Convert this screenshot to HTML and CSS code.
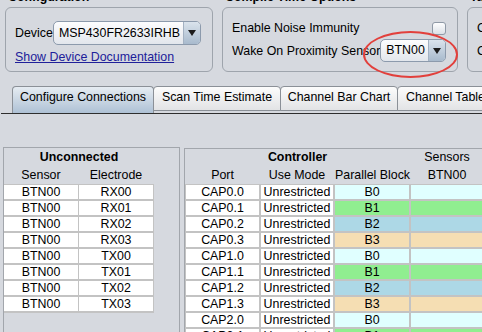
FILE: index.html
```html
<!DOCTYPE html>
<html lang="en">
<head>
  <meta charset="UTF-8" />
  <title>Configure Connections</title>
  <link rel="stylesheet" href="styles.css">
</head>
<body>
  <div class="top">
    <section class="group g-config">
      <h3 class="group-title">Configuration</h3>
      <div class="group-box">
        <div class="device-row">
          <span class="device-label">Device</span>
          <div class="combo combo-device">
            <span class="combo-text">MSP430FR2633IRHB</span>
            <span class="combo-arrow"></span>
          </div>
        </div>
        <a class="doc-link" href="#">Show Device Documentation</a>
      </div>
    </section>

    <section class="group g-compile">
      <h3 class="group-title">Compile Time Options</h3>
      <div class="group-box box-compile">
        <div class="opt-row opt-check">
          <span>Enable Noise Immunity</span>
          <span class="checkbox"></span>
        </div>
        <div class="opt-row opt-combo">
          <span>Wake On Proximity Sensor</span>
          <div class="combo combo-small">
            <span class="combo-text">BTN00</span>
            <span class="combo-arrow"></span>
          </div>
        </div>
        <div class="mark"></div>
      </div>
    </section>

    <section class="group g-third">
      <h3 class="group-title">Target</h3>
      <div class="group-box">
        <div class="opt-row opt-check"><span>Clock</span></div>
        <div class="opt-row opt-combo"><span>Conversion</span></div>
      </div>
    </section>
  </div>

  <nav class="tabs">
    <div class="tab tab-active">Configure Connections</div>
    <div class="tab tab-scan">Scan Time Estimate</div>
    <div class="tab tab-bar">Channel Bar Chart</div>
    <div class="tab tab-table">Channel Table</div>
  </nav>

  <main class="content">
    <section class="panel panel-unconnected">
      <div class="u-title">Unconnected</div>
      <div class="u-head">
        <span>Sensor</span>
        <span>Electrode</span>
      </div>
      <div class="u-grid">
        <span>BTN00</span><span>RX00</span>
        <span>BTN00</span><span>RX01</span>
        <span>BTN00</span><span>RX02</span>
        <span>BTN00</span><span>RX03</span>
        <span>BTN00</span><span>TX00</span>
        <span>BTN00</span><span>TX01</span>
        <span>BTN00</span><span>TX02</span>
        <span>BTN00</span><span>TX03</span>
      </div>
    </section>

    <section class="panel panel-controller">
      <div class="c-title">
        <span class="c-controller">Controller</span>
        <span>Sensors</span>
      </div>
      <div class="c-head">
        <span>Port</span>
        <span>Use Mode</span>
        <span>Parallel Block</span>
        <span>BTN00</span>
      </div>
      <div class="c-grid">
        <span>CAP0.0</span><span>Unrestricted</span><span class="b0">B0</span><span class="b0"></span>
        <span>CAP0.1</span><span>Unrestricted</span><span class="b1">B1</span><span class="b1"></span>
        <span>CAP0.2</span><span>Unrestricted</span><span class="b2">B2</span><span class="b2"></span>
        <span>CAP0.3</span><span>Unrestricted</span><span class="b3">B3</span><span class="b3"></span>
        <span>CAP1.0</span><span>Unrestricted</span><span class="b0">B0</span><span class="b0"></span>
        <span>CAP1.1</span><span>Unrestricted</span><span class="b1">B1</span><span class="b1"></span>
        <span>CAP1.2</span><span>Unrestricted</span><span class="b2">B2</span><span class="b2"></span>
        <span>CAP1.3</span><span>Unrestricted</span><span class="b3">B3</span><span class="b3"></span>
        <span>CAP2.0</span><span>Unrestricted</span><span class="b0">B0</span><span class="b0"></span>
        <span>CAP2.1</span><span>Unrestricted</span><span class="b1">B1</span><span class="b1"></span>
      </div>
    </section>
  </main>
</body>
</html>
```

FILE: styles.css
```css
* {
  box-sizing: border-box;
}

body {
  margin: 0;
  width: 482px;
  height: 332px;
  overflow: hidden;
  background: #d6d9df;
  font-family: "Liberation Sans", Arial, sans-serif;
  font-size: 12.4px;
  color: #000;
  white-space: nowrap;
}

/* top option groups */
.top {
  display: flex;
  gap: 9px;
  margin-top: -10px;
  padding-left: 5px;
}

.group {
  flex-shrink: 0;
}

.g-config {
  width: 208px;
}

.g-compile {
  width: 236px;
}

.g-third {
  width: 80px;
}

.group-title {
  margin: 0 0 3px 3px;
  height: 14px;
  line-height: 14px;
  font-size: 12.4px;
  font-weight: bold;
}

.group-box {
  height: 65px;
  border: 1px solid #9ea4ac;
  border-radius: 6px;
  padding: 13px 11px 0 9px;
}

.device-row {
  display: flex;
  align-items: center;
}

.device-label {
  width: 38px;
}

.combo {
  display: flex;
  border: 1px solid #8c9aac;
  border-radius: 5px;
  background: linear-gradient(#fdfdfe, #e2e6ec);
  overflow: hidden;
}

.combo-device {
  width: 149px;
  height: 24px;
}

.combo-small {
  width: 67px;
  height: 23px;
}

.combo-text {
  flex: 1;
  padding-left: 5px;
  line-height: 22px;
}

.combo-small .combo-text {
  line-height: 21px;
}

.combo-arrow {
  width: 17px;
  display: flex;
  align-items: center;
  justify-content: center;
  border-left: 1px solid #a3b1c2;
  background: linear-gradient(#dae3ec, #a8bacd);
}

.combo-arrow::after {
  content: "";
  border-left: 4px solid transparent;
  border-right: 4px solid transparent;
  border-top: 6px solid #1c1c1c;
}

.doc-link {
  display: block;
  margin-top: 5px;
  line-height: 15px;
  color: #20209a;
}

.box-compile {
  position: relative;
}

.opt-row {
  display: flex;
  align-items: center;
  justify-content: space-between;
}

.opt-check {
  height: 14px;
}

.opt-combo {
  height: 23px;
  margin-top: 4px;
}

.checkbox {
  width: 14px;
  height: 13px;
  border: 1px solid #8f99a6;
  border-radius: 3px;
  background: linear-gradient(#fdfdfe, #dce1e7);
}

/* red highlight drawn over the sensor combo */
.mark {
  position: absolute;
  left: 140px;
  top: 23px;
  width: 95px;
  height: 47px;
  border: 2px solid #e2403c;
  border-radius: 50%;
}

/* tabs */
.tabs {
  display: flex;
  align-items: flex-start;
  height: 28px;
  margin: 14px 0 0 1px;
  padding-left: 11px;
  border-bottom: 1px solid #2e2e2e;
}

.tab {
  flex-shrink: 0;
  height: 25px;
  margin-left: -1px;
  border: 1px solid #8b9097;
  border-radius: 4px 4px 0 0;
  background: linear-gradient(#fcfcfc, #e2e3e5);
  line-height: 21px;
  text-align: center;
  overflow: hidden;
}

.tab-active {
  width: 142px;
  height: 27px;
  margin-left: 0;
  border-bottom: none;
  background: linear-gradient(#e6ecf2, #aec1d5);
}

.tab-scan {
  width: 128px;
}

.tab-bar {
  width: 118px;
}

.tab-table {
  width: 100px;
  text-align: left;
  padding-left: 8px;
}

/* table panels */
.content {
  display: flex;
  align-items: flex-start;
  gap: 4px;
  margin-top: 33px;
  padding-left: 3px;
}

.panel {
  flex-shrink: 0;
  height: 220px;
  border: 1px solid #a2a6ac;
}

.panel-unconnected {
  width: 177px;
}

.panel-controller {
  width: 330px;
  margin-top: 1px;
}

.u-title {
  width: 150px;
  line-height: 18px;
  text-align: center;
  font-weight: bold;
}

.u-head,
.u-grid {
  display: grid;
  grid-template-columns: 74px 74px;
  column-gap: 1px;
  text-align: center;
}

.u-head {
  line-height: 18px;
}

.u-grid {
  width: 150px;
  row-gap: 2px;
  padding: 1px 1px 2px 0;
  background: #c3c3c3;
}

.u-grid span,
.c-grid span {
  height: 14px;
  line-height: 14px;
  background: #fff;
}

.c-title,
.c-head,
.c-grid {
  display: grid;
  grid-template-columns: 73px 72px 74px 72px;
  column-gap: 2px;
  padding-left: 1px;
  text-align: center;
}

.c-title {
  line-height: 17px;
}

.c-controller {
  grid-column: 1 / 4;
  font-weight: bold;
}

.c-head {
  line-height: 18px;
}

.c-grid {
  row-gap: 2px;
  padding-top: 1px;
  background: #c3c3c3;
}

.c-grid .b0 {
  background: #e0ffff;
}

.c-grid .b1 {
  background: #90ee90;
}

.c-grid .b2 {
  background: #add8e6;
}

.c-grid .b3 {
  background: #f5deb3;
}
```
